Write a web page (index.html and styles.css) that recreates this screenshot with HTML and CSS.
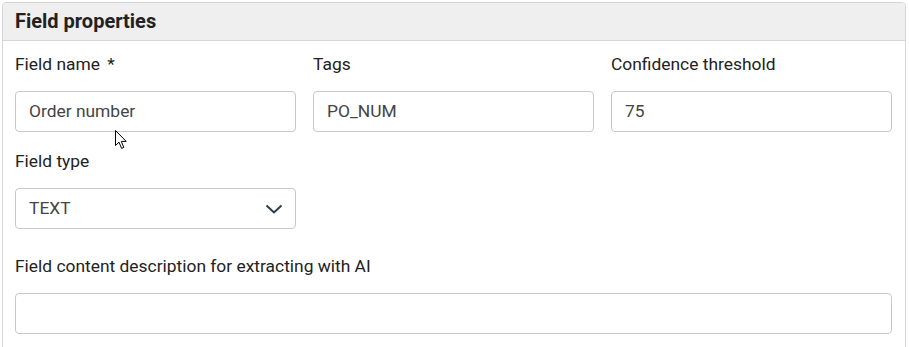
FILE: index.html
```html
<!DOCTYPE html>
<html lang="en">
<head>
  <meta charset="UTF-8">
  <title>Field properties</title>
  <link rel="stylesheet" href="styles.css">
</head>
<body>
  <div class="panel">
    <div class="panel-header">Field properties</div>
    <div class="panel-body">
      <div class="grid">
        <div class="field">
          <label>Field name <span class="req">*</span></label>
          <div class="input">Order number</div>
        </div>
        <div class="field">
          <label>Tags</label>
          <div class="input">PO_NUM</div>
        </div>
        <div class="field">
          <label>Confidence threshold</label>
          <div class="input">75</div>
        </div>
        <div class="field">
          <label>Field type</label>
          <div class="input select">
            <span>TEXT</span>
            <svg width="18" height="10" viewBox="0 0 18 10"><path d="M1.5 1.5 L9 8.5 L16.5 1.5" fill="none" stroke="#2c3b4c" stroke-width="2"/></svg>
          </div>
        </div>
      </div>
      <div class="field wide">
        <label>Field content description for extracting with AI</label>
        <div class="input"></div>
      </div>
    </div>
  </div>

  <!-- mouse pointer captured in the screenshot -->
  <svg class="cursor" width="13" height="20" viewBox="0 0 13 20">
    <path d="M0.5 0.5 L0.5 15.5 L4 12.2 L6.6 18.4 L8.8 17.4 L6.3 11.4 L11.2 11.4 Z" fill="#fff" stroke="#000" stroke-width="1"/>
  </svg>
</body>
</html>
```

FILE: styles.css
```css
body {
  margin: 0;
  font-family: Roboto, "Liberation Sans", Arial, sans-serif;
  color: #222;
  background: #fff;
}
.panel {
  margin: 2px 0 0 2px;
  width: 902px;
  height: 360px;
  border: 1px solid #d6d6d6;
  border-radius: 4px 4px 0 0;
}
.panel-header {
  height: 37px;
  line-height: 37px;
  padding: 0 12px;
  background: #efefef;
  border-bottom: 1px solid #d6d6d6;
  border-radius: 4px 4px 0 0;
  font-size: 20px;
  font-weight: bold;
  color: #222;
}
.panel-body {
  padding: 11px 13px 0 12px;
}
.grid {
  display: grid;
  grid-template-columns: repeat(3, 1fr);
  column-gap: 17px;
  row-gap: 17px;
}
.field label {
  display: block;
  font-size: 17.4px;
  line-height: 24px;
  margin-bottom: 15px;
  color: #222;
}
.req {
  margin-left: 3px;
}
.input {
  box-sizing: border-box;
  height: 41px;
  border: 1px solid #c9c9c9;
  border-radius: 4px;
  padding: 0 13px;
  font-size: 17.4px;
  line-height: 39px;
  color: #444;
}
.select {
  display: flex;
  align-items: center;
  justify-content: space-between;
  padding-right: 12px;
}
.wide {
  margin-top: 25px;
}
.cursor {
  position: absolute;
  left: 115px;
  top: 130px;
}
```
